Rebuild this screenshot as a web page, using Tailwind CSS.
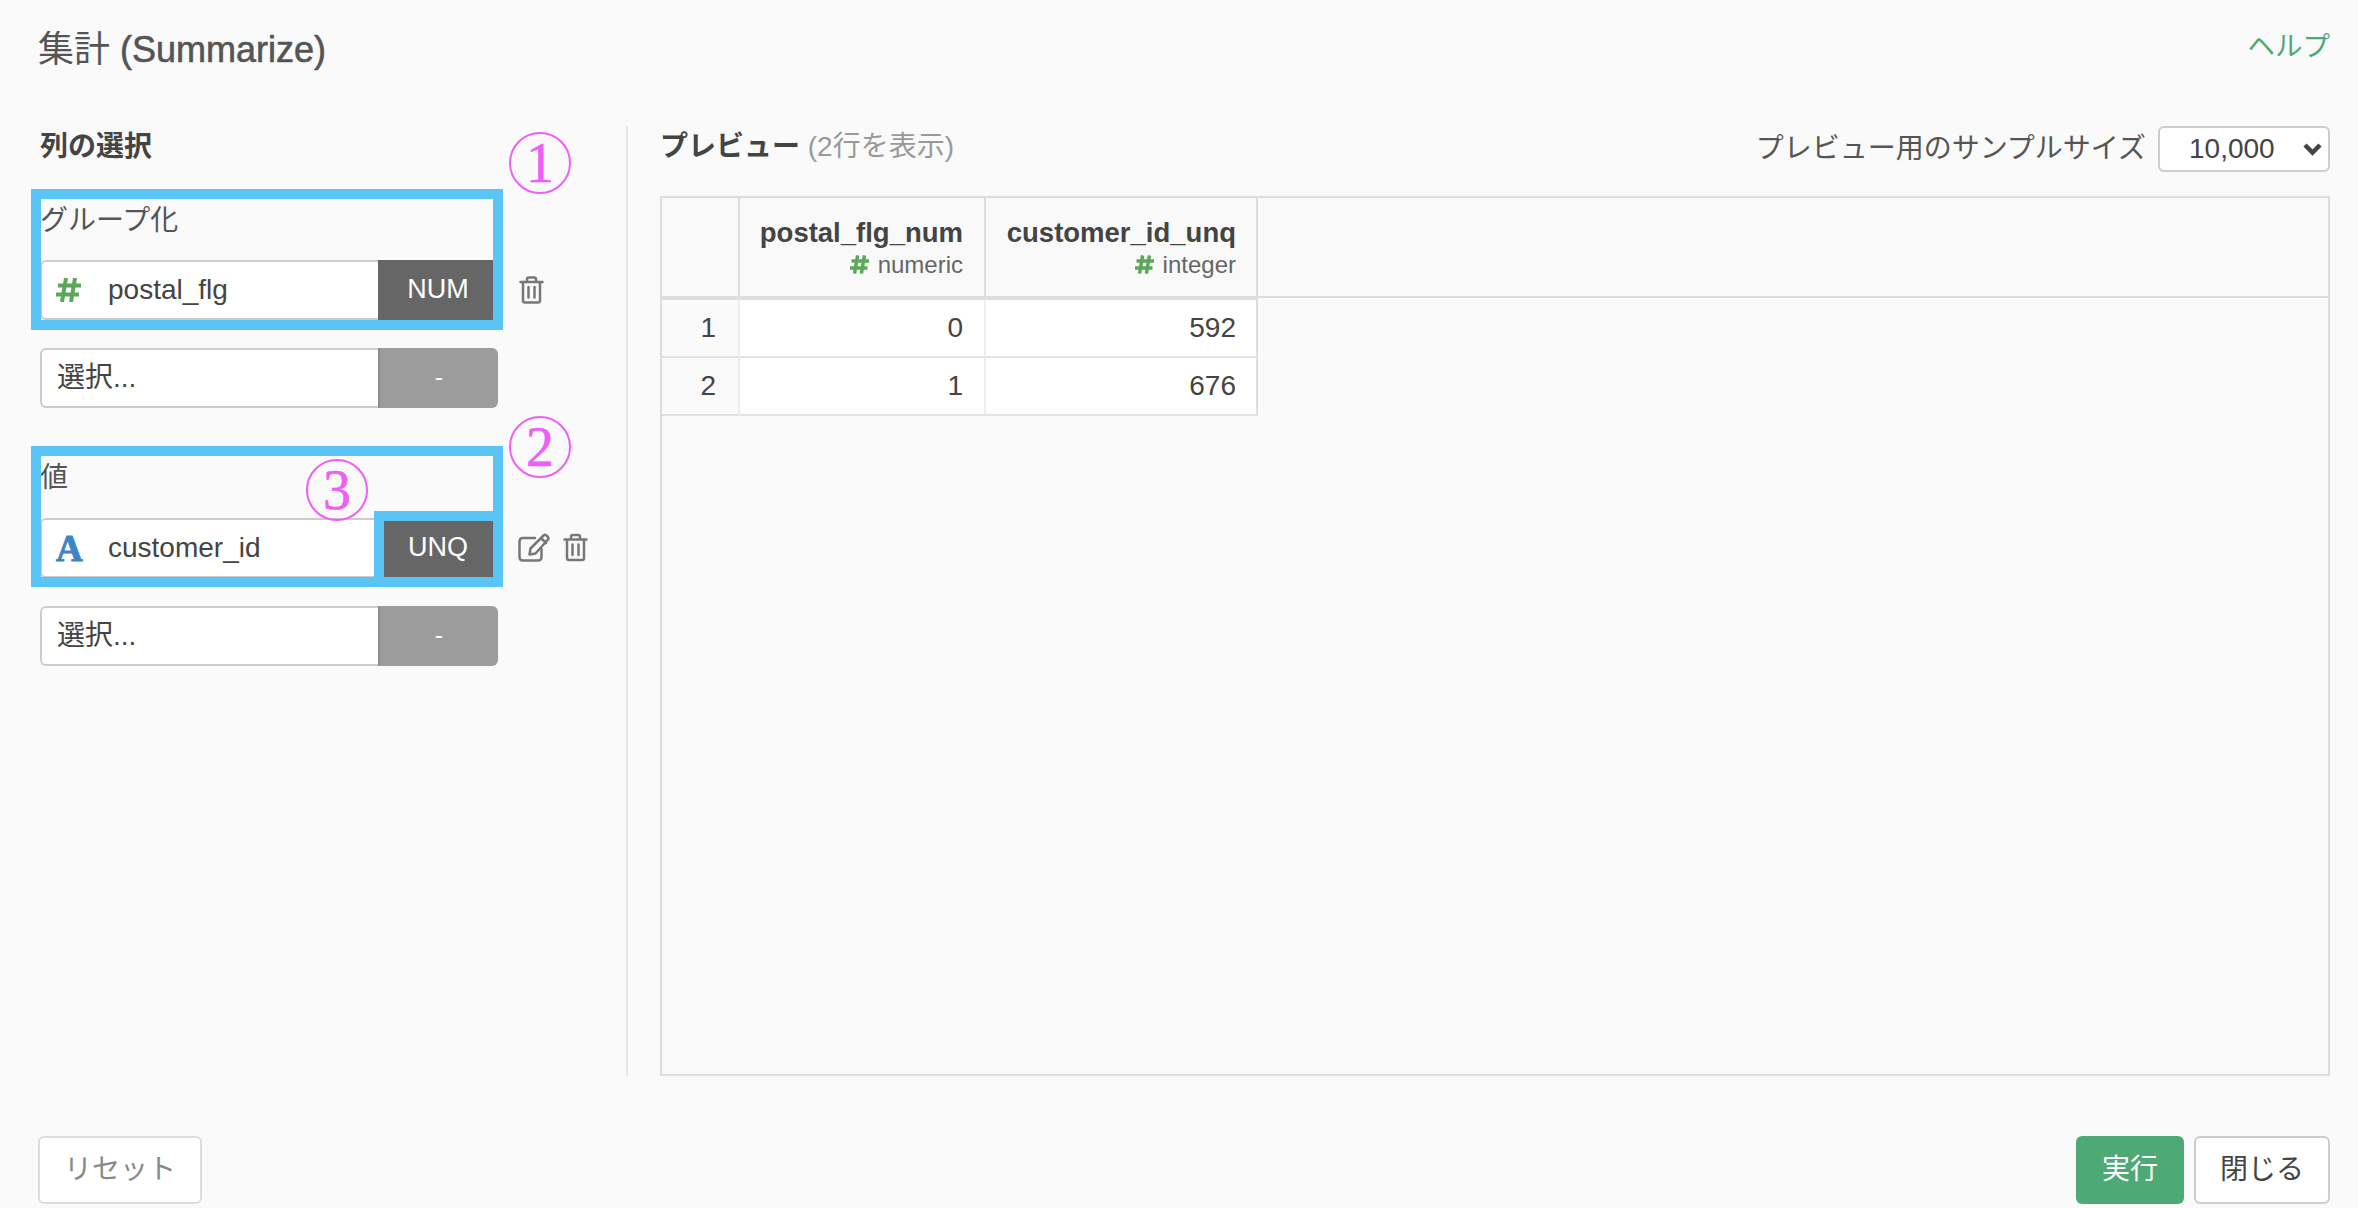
<!DOCTYPE html>
<html lang="ja">
<head>
    <meta charset="UTF-8">
    <title>集計 (Summarize)</title>
    <script src="https://cdn.jsdelivr.net/npm/@tailwindcss/browser@4"></script>
</head>
<body class="bg-[#fafafa] font-['Liberation_Sans','Noto_Sans_CJK_JP',sans-serif] text-[28px] text-[#444]">
    <div class="relative flex h-[1208px] w-[2358px] flex-col overflow-hidden">
        <!-- Header -->
        <div class="flex h-[126px] items-start justify-between pl-[38px] pr-[28px] pt-[26px]">
            <h1 class="text-[36px] leading-[48px] text-[#555]">集計 <span class="[-webkit-text-stroke:0.6px_#555]">(Summarize)</span></h1>
            <a class="pt-[3px] text-[27.5px] leading-[36px] text-[#4eaa75]">ヘルプ</a>
        </div>

        <!-- Main -->
        <div class="flex h-[950px]">
            <!-- Column picker -->
            <div class="w-[628px] border-r-2 border-[#e6e6e6] pl-[40px]">
                <div class="flex h-[40px] items-center pt-[1px] font-bold">列の選択</div>

                <div class="flex h-[94px] items-center pt-[16px] text-[#555]">グループ化</div>
                <div class="flex items-center">
                    <div class="flex h-[60px] w-[338px] items-center rounded-l-[6px] border-2 border-r-0 border-[#ccc] bg-white pl-[14px]">
                        <svg class="mr-[27px] h-[24px] w-[25px]" viewBox="0 0 25 24" fill="none" stroke="#5ba85a" stroke-width="4">
                            <path d="M10 0 6 24M19 0 15 24M2 7.500H25M0 16.500H23"/>
                        </svg>
                        <span>postal_flg</span>
                    </div>
                    <div class="flex h-[60px] w-[120px] items-center justify-center rounded-r-[6px] bg-[#666] pb-[2px] text-[27px] text-white">NUM</div>
                    <svg class="ml-[21px] h-[28px] w-[25px]" viewBox="0 0 25 28" fill="none" stroke="#777" stroke-width="2.500" stroke-linecap="round">
                        <path d="M1.500 6H23.500M8 6V3.500Q8 1.500 10 1.500H15Q17 1.500 17 3.500V6M4 6V24.500Q4 26.500 6 26.500H19Q21 26.500 21 24.500V6M9.500 11V21.500M15.500 11V21.500"/>
                    </svg>
                </div>
                <div class="mt-[28px] flex">
                    <div class="flex h-[60px] w-[338px] items-center rounded-l-[6px] border-2 border-r-0 border-[#ccc] bg-white pl-[15px]">選択...</div>
                    <div class="flex h-[60px] w-[120px] items-center justify-center rounded-r-[6px] border-l-2 border-[#8c8c8c] bg-[#9c9c9c] text-[25px] text-white">-</div>
                </div>

                <div class="flex h-[110px] items-center pt-[30px] text-[#555]">値</div>
                <div class="flex items-center">
                    <div class="flex h-[60px] w-[338px] items-center rounded-l-[6px] border-2 border-r-0 border-[#ccc] bg-white pl-[14px]">
                        <span class="mr-[27px] w-[25px] font-['Liberation_Serif',serif] text-[37px] leading-none font-bold text-[#3d85c6] [-webkit-text-stroke:1px_#3d85c6]">A</span>
                        <span>customer_id</span>
                    </div>
                    <div class="flex h-[60px] w-[120px] items-center justify-center rounded-r-[6px] bg-[#666] pb-[2px] text-[27px] text-white">UNQ</div>
                    <svg class="ml-[20px] mb-[2px] h-[29px] w-[32px]" viewBox="0 0 32 29" fill="none" stroke="#777" stroke-width="2.500" stroke-linecap="round" stroke-linejoin="round">
                        <path d="M17 5H5Q1.500 5 1.500 8.500V24Q1.500 27.500 5 27.500H20Q23.500 27.500 23.500 24V16M11.500 21.500 12.500 15.500 25.500 2.500Q27 1 28.500 2.500L30 4Q31 5.500 30 6.500L17.500 20.500ZM23 5 28 10"/>
                    </svg>
                    <svg class="ml-[13px] mb-[2px] h-[29px] w-[25px]" viewBox="0 0 25 28" fill="none" stroke="#777" stroke-width="2.500" stroke-linecap="round">
                        <path d="M1.500 6H23.500M8 6V3.500Q8 1.500 10 1.500H15Q17 1.500 17 3.500V6M4 6V24.500Q4 26.500 6 26.500H19Q21 26.500 21 24.500V6M9.500 11V21.500M15.500 11V21.500"/>
                    </svg>
                </div>
                <div class="mt-[28px] flex">
                    <div class="flex h-[60px] w-[338px] items-center rounded-l-[6px] border-2 border-r-0 border-[#ccc] bg-white pl-[15px]">選択...</div>
                    <div class="flex h-[60px] w-[120px] items-center justify-center rounded-r-[6px] border-l-2 border-[#8c8c8c] bg-[#9c9c9c] text-[25px] text-white">-</div>
                </div>
            </div>

            <!-- Preview -->
            <div class="flex flex-1 flex-col pl-[32px] pr-[28px]">
                <div class="flex h-[46px] items-center justify-between">
                    <div class="pb-[5px]"><span class="font-bold">プレビュー</span> <span class="text-[#999]">(2行を表示)</span></div>
                    <div class="flex items-center gap-[12px]">
                        <span class="text-[#555]">プレビュー用のサンプルサイズ</span>
                        <div class="relative">
                            <select class="h-[46px] w-[172px] appearance-none rounded-[6px] border-2 border-[#ccc] bg-white pl-[29px] text-[#444]">
                                <option>10,000</option>
                            </select>
                            <svg class="absolute right-[8px] top-[16px] h-[14px] w-[19px]" viewBox="0 0 19 14" fill="none" stroke="#444" stroke-width="4.500">
                                <path d="M2 3 9.500 10.500 17 3"/>
                            </svg>
                        </div>
                    </div>
                </div>
                <div class="mt-[24px] h-[880px] border-2 border-[#ddd]">
                    <table class="w-full table-fixed border-separate border-spacing-0">
                        <colgroup>
                            <col class="w-[78px]">
                            <col class="w-[246px]">
                            <col class="w-[272px]">
                            <col>
                        </colgroup>
                        <thead>
                            <tr>
                                <th class="h-[100px] border-r-2 border-b-2 border-[#ddd] bg-[#f9f9f9]"></th>
                                <th class="h-[100px] border-r-2 border-b-2 border-[#ddd] bg-[#f9f9f9] pr-[21px] pt-[3px] text-right font-normal">
                                    <div class="text-[27.500px] font-bold leading-[32px]">postal_flg_num</div>
                                    <div class="flex items-center justify-end text-[24px] leading-[32px] text-[#666]">
                                        <svg class="mr-[9px] h-[19px] w-[19px]" viewBox="0 0 25 24" fill="none" stroke="#5ba85a" stroke-width="4.500"><path d="M10 0 6 24M19 0 15 24M2 7.500H25M0 16.500H23"/></svg>numeric
                                    </div>
                                </th>
                                <th class="h-[100px] border-r-2 border-b-2 border-[#ddd] bg-[#f9f9f9] pr-[20px] pt-[3px] text-right font-normal">
                                    <div class="text-[27.500px] font-bold leading-[32px]">customer_id_unq</div>
                                    <div class="flex items-center justify-end text-[24px] leading-[32px] text-[#666]">
                                        <svg class="mr-[9px] h-[19px] w-[19px]" viewBox="0 0 25 24" fill="none" stroke="#5ba85a" stroke-width="4.500"><path d="M10 0 6 24M19 0 15 24M2 7.500H25M0 16.500H23"/></svg>integer
                                    </div>
                                </th>
                                <th class="h-[100px] border-b-2 border-[#ddd]"></th>
                            </tr>
                        </thead>
                        <tbody>
                            <tr>
                                <td class="h-[60px] border-t-2 border-r-2 border-b-2 border-t-[#ddd] border-r-[#eee] border-b-[#e2e2e2] pr-[22px] text-right">1</td>
                                <td class="h-[60px] border-t-2 border-r-2 border-b-2 border-t-[#ddd] border-r-[#eee] border-b-[#e2e2e2] bg-white pr-[21px] text-right">0</td>
                                <td class="h-[60px] border-t-2 border-r-2 border-b-2 border-t-[#ddd] border-r-[#ddd] border-b-[#e2e2e2] bg-white pr-[20px] text-right">592</td>
                                <td></td>
                            </tr>
                            <tr>
                                <td class="h-[58px] border-r-2 border-b-2 border-r-[#eee] border-b-[#e2e2e2] pr-[22px] text-right">2</td>
                                <td class="h-[58px] border-r-2 border-b-2 border-r-[#eee] border-b-[#e2e2e2] bg-white pr-[21px] text-right">1</td>
                                <td class="h-[58px] border-r-2 border-b-2 border-r-[#ddd] border-b-[#e2e2e2] bg-white pr-[20px] text-right">676</td>
                                <td></td>
                            </tr>
                        </tbody>
                    </table>
                </div>
            </div>
        </div>

        <!-- Footer -->
        <div class="flex flex-1 items-end justify-between pb-[4px] pl-[38px] pr-[28px]">
            <button class="h-[68px] w-[164px] rounded-[6px] border-2 border-[#ddd] bg-white text-[#888]">リセット</button>
            <div class="flex gap-[10px]">
                <button class="h-[68px] w-[108px] rounded-[6px] bg-[#4eaa75] text-white">実行</button>
                <button class="h-[68px] w-[136px] rounded-[6px] border-2 border-[#ccc] bg-white text-[#444]">閉じる</button>
            </div>
        </div>

        <!-- Annotations drawn over the screen -->
        <div class="absolute left-[31px] top-[189px] h-[141px] w-[472px] border-[10px] border-[#5ac4f6]"></div>
        <div class="absolute left-[31px] top-[446px] h-[141px] w-[472px] border-[10px] border-[#5ac4f6]"></div>
        <div class="absolute left-[374px] top-[511px] h-[76px] w-[129px] border-[10px] border-[#5ac4f6]"></div>
        <div class="absolute left-[509px] top-[132px] flex h-[62px] w-[62px] items-center justify-center rounded-full border-2 border-[#ee5ff5] font-['Liberation_Serif',serif] text-[56px] leading-none text-[#ee5ff5] [-webkit-text-stroke:0.6px_#ee5ff5]">1</div>
        <div class="absolute left-[509px] top-[416px] flex h-[62px] w-[62px] items-center justify-center rounded-full border-2 border-[#ee5ff5] font-['Liberation_Serif',serif] text-[56px] leading-none text-[#ee5ff5] [-webkit-text-stroke:0.6px_#ee5ff5]">2</div>
        <div class="absolute left-[306px] top-[459px] flex h-[62px] w-[62px] items-center justify-center rounded-full border-2 border-[#ee5ff5] font-['Liberation_Serif',serif] text-[56px] leading-none text-[#ee5ff5] [-webkit-text-stroke:0.6px_#ee5ff5]">3</div>
    </div>
</body>
</html>
